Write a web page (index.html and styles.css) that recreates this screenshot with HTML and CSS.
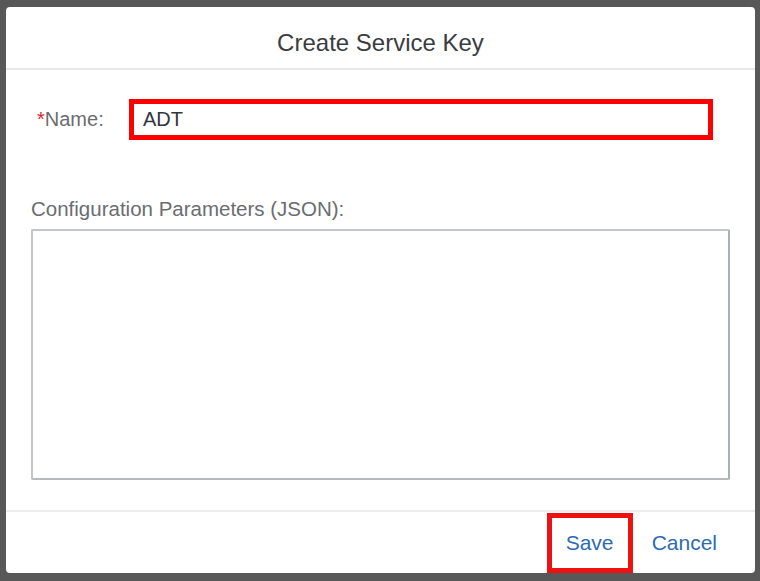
FILE: index.html
```html
<!DOCTYPE html>
<html lang="en">
<head>
<meta charset="utf-8">
<title>Create Service Key</title>
<link rel="stylesheet" href="styles.css">
</head>
<body>
<div class="dialog">
  <header class="dialog-header">
    <h1 class="dialog-title">Create Service Key</h1>
  </header>
  <main class="dialog-content">
    <div class="name-row">
      <label class="name-label"><span class="required">*</span>Name:</label>
      <div class="name-input">ADT</div>
    </div>
    <label class="config-label">Configuration Parameters (JSON):</label>
    <div class="config-area"></div>
  </main>
  <footer class="dialog-footer">
    <button class="btn btn-save">Save</button>
    <button class="btn btn-cancel">Cancel</button>
  </footer>
</div>
</body>
</html>
```

FILE: styles.css
```css
html, body {
  margin: 0;
  padding: 0;
}
body {
  background: #585858;
  width: 760px;
  height: 581px;
  box-sizing: border-box;
  padding: 7px 0 0 6px;
  font-family: "Liberation Sans", Arial, sans-serif;
  overflow: hidden;
}
.dialog {
  width: 749px;
  height: 566px;
  background: #ffffff;
  border-radius: 4px;
  display: flex;
  flex-direction: column;
  box-sizing: border-box;
}
.dialog-header {
  height: 63px;
  box-sizing: border-box;
  border-bottom: 2px solid #e8e8e8;
  padding-top: 22px;
  text-align: center;
}
.dialog-title {
  margin: 0;
  font-size: 24px;
  font-weight: normal;
  line-height: 27px;
  color: #3a3d40;
}
.dialog-content {
  height: 440px;
  box-sizing: border-box;
  padding: 29px 25px 0 25px;
  display: flex;
  flex-direction: column;
}
.name-row {
  display: flex;
  align-items: center;
  height: 41px;
}
.name-label {
  width: 98px;
  padding-left: 6px;
  box-sizing: border-box;
  font-size: 20px;
  color: #6a6d70;
}
.required {
  color: #d9262e;
}
.name-input {
  width: 584px;
  height: 41px;
  box-sizing: border-box;
  border: 5px solid #ff0000;
  padding-left: 9px;
  display: flex;
  align-items: center;
  font-size: 20px;
  color: #32363a;
}
.config-label {
  margin-top: 57px;
  font-size: 20.5px;
  line-height: 24px;
  color: #6a6d70;
}
.config-area {
  margin-top: 8px;
  width: 699px;
  height: 251px;
  box-sizing: border-box;
  border: 2px solid #c2c6cb;
  border-right-color: #abb0b5;
  border-bottom-color: #b5babf;
  border-radius: 2px;
}
.dialog-footer {
  border-top: 2px solid #ececec;
  height: 63px;
  box-sizing: border-box;
  display: flex;
  justify-content: flex-end;
  align-items: flex-start;
  padding: 1px 23px 0 0;
}
.btn {
  background: none;
  font-family: "Liberation Sans", Arial, sans-serif;
  font-size: 21px;
  color: #2d6bb0;
  height: 60px;
  padding: 0 15px;
  margin: 0;
  cursor: pointer;
}
.btn-save {
  border: 5px solid #ee1111;
  width: 86px;
  padding: 0;
}
.btn-cancel {
  border: 5px solid transparent;
  padding: 0 10px;
  margin-left: 4px;
}
```
